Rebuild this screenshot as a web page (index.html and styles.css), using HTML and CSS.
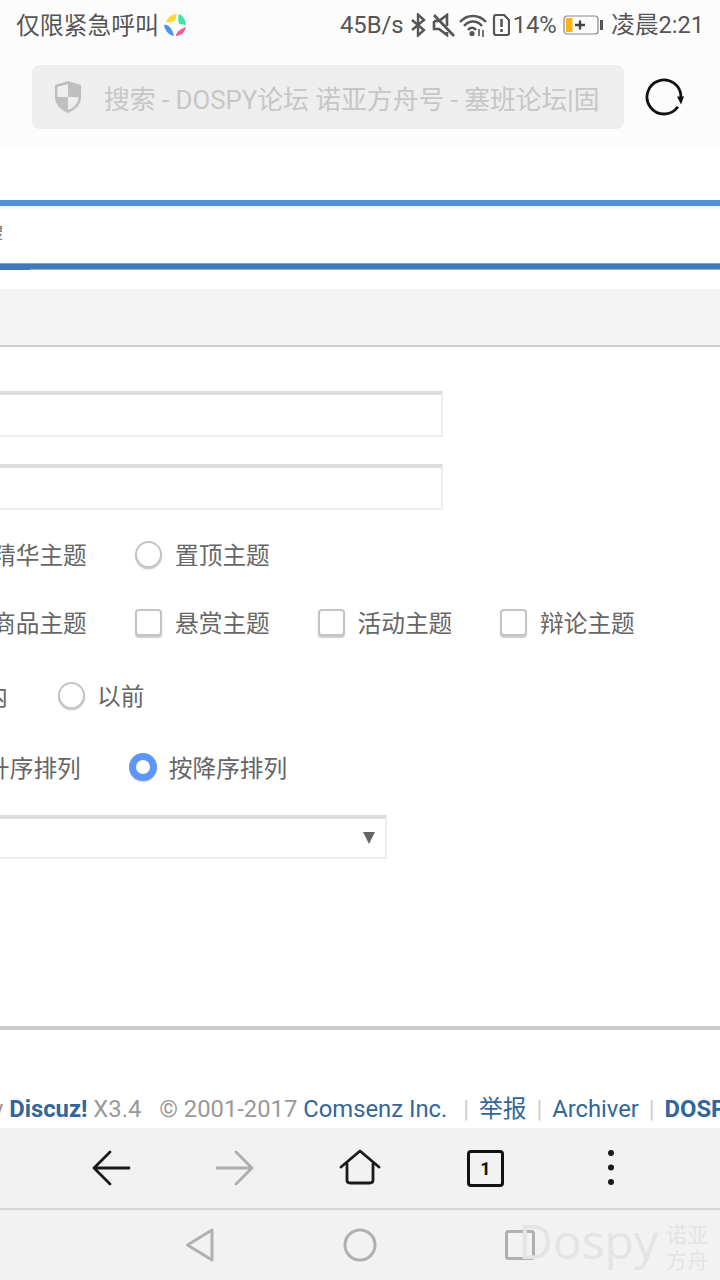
FILE: index.html
```html
<!DOCTYPE html>
<html lang="zh">
<head>
<meta charset="utf-8">
<title>搜索 - DOSPY论坛</title>
<link rel="stylesheet" href="styles.css">
</head>
<body>
<div class="screen">
  <header class="status">
    <span class="carrier">仅限紧急呼叫</span>
    <svg class="applogo" viewBox="0 0 24 24" width="24" height="24">
      <path d="M3 9C5 4 9 1 14 1L12 8C9 8 7 10 3 9Z" fill="#fdd835"/>
      <path d="M16 1C20 3 23 7 23 12L16 11C16 8 14 6 16 1Z" fill="#46e0a8"/>
      <path d="M23 14C22 19 18 23 13 23C13 20 15 17 23 14Z" fill="#fb5b87"/>
      <path d="M11 23C6 22 2 18 1 12C5 11 9 15 11 23Z" fill="#4c92f2"/>
    </svg>
    <span class="speed">45B/s</span>
    <svg class="ic-bt" viewBox="0 0 16 24" width="16" height="24"><path d="M2 7L14 17L8 22.500V1.500L14 7L2 17" fill="none" stroke="#555" stroke-width="2.400"/></svg>
    <svg class="ic-mute" viewBox="0 0 24 24" width="24" height="24"><path d="M2 8H7L15 2V13M2 8V16H7L15 22V19" fill="none" stroke="#555" stroke-width="2.600"/><path d="M2 2L22 23" stroke="#555" stroke-width="2.600"/></svg>
    <svg class="ic-wifi" viewBox="0 0 28 24" width="28" height="24"><path d="M1 9C8 1 20 1 27 9M5 13C10 7 18 7 23 13M9 17C11 14 15 14 17 17" fill="none" stroke="#555" stroke-width="2.400"/><circle cx="13" cy="20.500" r="2.600" fill="#555"/><path d="M20 16V23M24 24V17" stroke="#555" stroke-width="1.600"/></svg>
    <svg class="ic-sim" viewBox="0 0 18 22" width="18" height="22"><path d="M2 3Q2 1 4 1H12L17 6V19Q17 21 15 21H4Q2 21 2 19Z" fill="none" stroke="#555" stroke-width="2.200"/><path d="M9.500 5V13M9.500 15V18" stroke="#555" stroke-width="2.600"/></svg>
    <span class="pct">14%</span>
    <svg class="ic-batt" viewBox="0 0 40 20" width="40" height="20"><rect x="1" y="1" width="34" height="18" rx="3" fill="none" stroke="#888" stroke-width="1.200"/><rect x="3" y="3" width="6.500" height="14" fill="#fdb515"/><path d="M12 10H22M17 5.500V14.500" stroke="#444" stroke-width="2.400"/><rect x="37" y="5" width="3" height="10" fill="#555"/></svg>
    <span class="clock">凌晨2:21</span>
  </header>

  <div class="urlbar">
    <div class="pill">
      <svg class="shield" viewBox="0 0 28 34" width="28" height="34"><path d="M14 1L27 5V17C27 25 21 30 14 33C7 30 1 25 1 17V5Z" fill="#bfbfbf"/><path d="M14 4L3.500 7V17H14ZM14 17H24.500C24.500 23 20 28 14 30Z" fill="#eee"/></svg>
      <span class="pagetitle">搜索 - DOSPY论坛 诺亚方舟号 - 塞班论坛|固</span>
    </div>
    <svg class="reload" viewBox="0 0 40 40" width="40" height="40"><path d="M33.900 29.800A17 17 0 1 1 37 20" fill="none" stroke="#111" stroke-width="2.800"/><path d="M33 19.500H40L37 27.500Z" fill="#111"/></svg>
  </div>

  <main class="page">
    <div class="nav-top"><span class="nav-clip">搜</span></div>
    <div class="nav-bottom"></div>
    <div class="band"></div>

    <div class="field"></div>
    <div class="field field-2"></div>

    <div class="opt opt-1">
      <span class="lbl clip-a">精华主题</span>
      <span class="radio"></span><span class="lbl">置顶主题</span>
    </div>
    <div class="opt opt-2">
      <span class="lbl clip-a">商品主题</span>
      <span class="check"></span><span class="lbl lbl-w">悬赏主题</span>
      <span class="check"></span><span class="lbl lbl-w">活动主题</span>
      <span class="check"></span><span class="lbl">辩论主题</span>
    </div>
    <div class="opt opt-3">
      <span class="lbl clip-b">内</span>
      <span class="radio radio-tight"></span><span class="lbl">以前</span>
    </div>
    <div class="opt opt-4">
      <span class="lbl clip-c">升序排列</span>
      <span class="radio on"></span><span class="lbl">按降序排列</span>
    </div>
    <div class="select"><span class="arrow"></span></div>

    <div class="rule"></div>
    <div class="foot"><span class="clip-foot">y</span> <b class="link">Discuz!</b> X3.4 <span class="copy">© 2001-2017</span> <span class="link">Comsenz Inc.</span> <i class="pipe pipe-first">|</i> <span class="link">举报</span> <i class="pipe">|</i> <span class="link">Archiver</span> <i class="pipe">|</i> <b class="link">DOSPY</b></div>
  </main>

  <nav class="toolbar">
    <svg class="tb tb-back" viewBox="0 0 40 40" width="40" height="40"><path d="M38 20H3M19 4L3 20L19 36" fill="none" stroke="#1a1a1a" stroke-width="2.800" stroke-linecap="round" stroke-linejoin="round"/></svg>
    <svg class="tb tb-fwd" viewBox="0 0 40 40" width="40" height="40"><path d="M2 20H37M21 4L37 20L21 36" fill="none" stroke="#adadad" stroke-width="2.800" stroke-linecap="round" stroke-linejoin="round"/></svg>
    <svg class="tb tb-home" viewBox="0 0 42 40" width="42" height="40"><path d="M2 19L21 3L40 19M8 16V32Q8 35 11 35H31Q34 35 34 32V16" fill="none" stroke="#1a1a1a" stroke-width="2.800" stroke-linecap="round" stroke-linejoin="round"/></svg>
    <span class="tabs">1</span>
    <svg class="tb tb-more" viewBox="0 0 8 40" width="8" height="40"><circle cx="4" cy="5" r="3" fill="#1a1a1a"/><circle cx="4" cy="19.500" r="3" fill="#1a1a1a"/><circle cx="4" cy="34" r="3" fill="#1a1a1a"/></svg>
  </nav>

  <footer class="sysnav">
    <svg class="sn sn-back" viewBox="0 0 30 34" width="30" height="34"><path d="M2.500 17L27 2V32Z" fill="none" stroke="#b0b0b0" stroke-width="3" stroke-linejoin="round"/></svg>
    <svg class="sn sn-home" viewBox="0 0 34 34" width="34" height="34"><circle cx="17" cy="17" r="15" fill="none" stroke="#b0b0b0" stroke-width="3"/></svg>
    <svg class="sn sn-rec" viewBox="0 0 32 32" width="32" height="32"><rect x="2.500" y="2.500" width="27" height="27" rx="2" fill="none" stroke="#b0b0b0" stroke-width="3"/></svg>
    <div class="wm"><span class="wm-en">Dospy</span><span class="wm-cn">诺亚<br>方舟</span></div>
  </footer>
</div>
</body>
</html>
```

FILE: styles.css
```css
* { box-sizing: border-box; }
html, body { margin: 0; padding: 0; background: #fff; }
body { font-family: Roboto, "Noto Sans CJK SC", sans-serif; }
.screen { position: relative; width: 720px; height: 1280px; overflow: hidden; display: flex; flex-direction: column; }

.status { height: 50px; flex: none; background: #fcfcfc; display: flex; align-items: center; padding: 0 16px 0 16px; color: #555; font-size: 23.8px; line-height: 1; white-space: nowrap; }
.carrier { font-family: "Noto Sans CJK SC", sans-serif; margin-top: -2px; }
.applogo { margin-left: 4px; }
.speed { margin-left: auto; margin-top: 2px; }
.ic-bt { margin-left: 6px; }
.ic-mute { margin-left: 6px; }
.ic-wifi { margin-left: 3px; }
.ic-sim { margin-left: 5px; }
.pct { margin-left: 3px; margin-top: 2px; }
.ic-batt { margin-left: 6.500px; }
.clock { margin-left: 8px; font-size: 23.600px; margin-top: 2px; font-family: Roboto, "Noto Sans CJK SC", sans-serif; }

.urlbar { height: 98px; flex: none; background: #fcfcfc; display: flex; align-items: center; padding: 0 0 4px 32px; }
.pill { width: 592px; height: 64px; background: #eee; border-radius: 8px; display: flex; align-items: center; padding-left: 22px; overflow: hidden; }
.pagetitle { margin-left: 22px; font-size: 25.8px; color: #c6c6c6; white-space: nowrap; }
.reload { margin-left: 20px; }

.page { flex: 1; background: #fff; min-height: 0; overflow: hidden; padding-top: 52px; }
.nav-top { height: 63px; border-top: 6px solid #5391d6; background: linear-gradient(#eee, #fff 4px); overflow: hidden; display: flex; align-items: center; }
.nav-clip { font-size: 16px; color: #666; margin-left: -13px; margin-top: -8px; }
.nav-bottom { height: 7px; border-top: 1px solid #7ba5d8; background: linear-gradient(90deg, #4378b8 30px, #8fb3e0 30px) bottom / 100% 1px no-repeat, #4378b8; }
.band { height: 58px; margin-top: 19px; background: #f4f4f4; border-bottom: 2px solid #ccc; }

.field { width: 443px; height: 46px; margin-top: 44px; border: 2px solid #eee; border-top: 4px solid #ddd; border-left: 0; background: #fff; }
.field-2 { margin-top: 27px; }

.opt { display: flex; align-items: center; height: 40px; white-space: nowrap; }
.opt-1 { margin-top: 24px; }
.opt-2 { margin-top: 28px; }
.opt-3 { margin-top: 33px; }
.opt-4 { margin-top: 32px; }
.lbl { font-family: "Noto Sans CJK SC", sans-serif; font-size: 23.7px; color: #666; flex: none; }
.clip-a { width: 95px; margin-right: 48px; margin-left: -8px; }
.clip-b { width: 8px; margin-right: 50px; direction: rtl; overflow: hidden; }
.clip-c { margin-left: -14px; margin-right: 48px; }
.radio, .check { flex: none; width: 27px; height: 27px; margin-right: 13px; background: #fff; border: 2px solid #c4c4c4; box-shadow: 0 1.5px 1px #ccc; }
.radio { border-radius: 50%; }
.check { border-radius: 4px; }
.radio-tight { margin-right: 12px; }
.radio.on { width: 28px; height: 28px; margin-right: 12px; border: 7px solid #5c96fb; box-shadow: 0 1.5px 1px #ddd; }
.lbl-w { width: 95px; margin-right: 47.5px; }

.select { width: 387px; height: 44px; margin-top: 28px; border: 2px solid #eee; border-top: 4px solid #ddd; border-left: 0; display: flex; align-items: center; justify-content: flex-end; padding-right: 10px; }
.arrow { width: 0; height: 0; border-left: 6px solid transparent; border-right: 6px solid transparent; border-top: 12px solid #666; }

.rule { height: 4px; margin-top: 167px; background: #ccc; }
.foot { height: 99px; padding-top: 67px; margin-left: -8px; font-size: 23.8px; line-height: 24px; color: #999; white-space: nowrap; }
.link { color: #336699; font-style: normal; }
.copy { margin-left: 12px; }
.pipe { font-style: normal; color: #ccc; margin: 0 4px; }
.pipe-first { margin-left: 10px; }

.toolbar { position: absolute; left: 0; right: 0; top: 1128px; height: 82px; background: #f2f2f2; border-bottom: 2px solid #d6d6d6; display: flex; align-items: center; padding: 0 0 0 91px; }
.tb-fwd { margin-left: 84px; }
.tb-home { margin-left: 84px; }
.tabs { margin-left: 86px; width: 37px; height: 37px; border: 3px solid #111; border-radius: 4px; font-size: 18px; font-weight: 700; color: #111; display: flex; align-items: center; justify-content: center; }
.tb-more { margin-left: 103px; }

.sysnav { position: absolute; left: 0; right: 0; top: 1210px; height: 70px; background: #f2f2f2; display: flex; align-items: center; padding: 0 0 1px 185px; }
.sn-home { margin-left: 128px; }
.sn-rec { margin-left: 127px; }
.wm { position: absolute; left: 518px; top: 9px; display: flex; align-items: center; color: #e4e4e4; white-space: nowrap; }
.wm-en { font-family: "Open Sans", sans-serif; font-size: 48px; line-height: 62px; margin-top: -9px; }
.wm-cn { font-family: "Noto Sans CJK SC", sans-serif; font-size: 21px; line-height: 26px; margin-left: 8px; flex: none; }
```
